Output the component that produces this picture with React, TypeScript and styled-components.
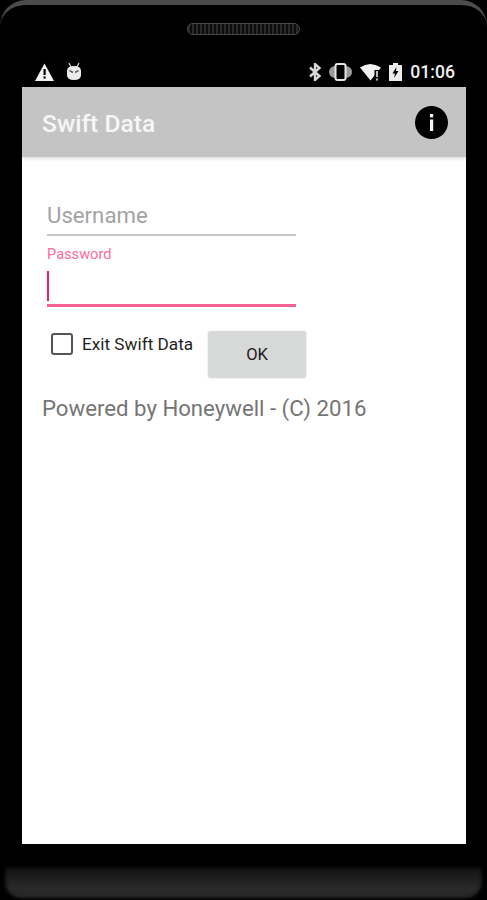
import styled, { createGlobalStyle } from 'styled-components'

const GlobalStyle = createGlobalStyle`
  html, body {
    margin: 0;
    padding: 0;
    background: #000;
  }
  body {
    font-family: Roboto, "Liberation Sans", sans-serif;
  }
`

const Device = styled.div`
  width: 487px;
  height: 900px;
  background: #000;
  display: flex;
  flex-direction: column;
  overflow: hidden;
`

const TopBezel = styled.div`
  height: 87px;
  box-sizing: border-box;
  padding-top: 18px;
  border-top: 5px solid #4c4c4c;
  border-radius: 26px 26px 0 0;
  display: flex;
  flex-direction: column;
  align-items: center;
`

const Speaker = styled.div`
  width: 113px;
  height: 12px;
  box-sizing: border-box;
  flex-shrink: 0;
  border: 1px solid #4a4a4a;
  border-radius: 6px;
  background: repeating-linear-gradient(90deg, #2a2a2a 0 2px, #0c0c0c 2px 4px);
`

const StatusBar = styled.div`
  margin-top: 24px;
  width: 100%;
  height: 26px;
  box-sizing: border-box;
  padding: 0 32px 0 35px;
  display: flex;
  align-items: center;
  justify-content: space-between;
`

const StatusGroup = styled.div<{ $gap: number }>`
  display: flex;
  align-items: center;
  gap: ${({ $gap }) => $gap}px;
`

const Clock = styled.span`
  color: #f0f0f0;
  font-size: 17.6px;
  font-weight: 500;
`

const Screen = styled.main`
  width: 444px;
  height: 757px;
  margin-left: 22px;
  flex-shrink: 0;
  background: #fff;
  display: flex;
  flex-direction: column;
`

const Toolbar = styled.header`
  height: 70px;
  flex-shrink: 0;
  box-sizing: border-box;
  padding: 2px 18px 0 20px;
  background: #c4c4c4;
  box-shadow: 0 2px 3px rgba(0, 0, 0, 0.12);
  display: flex;
  align-items: center;
  justify-content: space-between;
`

const Title = styled.h1`
  margin: 0;
  color: #f6f6f6;
  font-size: 24.6px;
  font-weight: 500;
`

const InfoWrap = styled.div`
  height: 33px;
  margin-top: -2px;
`

const Form = styled.form`
  padding: 44px 0 0 25px;
  display: flex;
  flex-direction: column;
`

const UsernameField = styled.div`
  width: 249px;
  height: 35px;
  box-sizing: border-box;
  border-bottom: 2px solid #c6c6c6;
  color: #a3a3a3;
  font-size: 22.2px;
  line-height: 29px;
`

const PasswordLabel = styled.label`
  margin-top: 9px;
  color: #fb6c9c;
  font-size: 14.6px;
  line-height: 18px;
`

const PasswordField = styled.div`
  width: 249px;
  height: 36px;
  margin-top: 8px;
  box-sizing: border-box;
  border-bottom: 3px solid #f4628f;
`

const Caret = styled.div`
  width: 2px;
  height: 30px;
  background: #e91e63;
`

const ActionRow = styled.div`
  margin-top: 24px;
  padding-left: 4px;
  display: flex;
  align-items: flex-start;
`

const CheckLabel = styled.label`
  margin-top: 2px;
  display: flex;
  align-items: center;
  gap: 9px;
  color: #1f1f1f;
  font-size: 17.2px;
`

const CheckBox = styled.span`
  width: 22px;
  height: 22px;
  box-sizing: border-box;
  border: 2px solid #555;
  border-radius: 3px;
`

const OkButton = styled.button`
  width: 98px;
  height: 46px;
  margin-left: 15px;
  padding: 0;
  border: none;
  border-radius: 2px;
  background: #d7d8d8;
  box-shadow: 0 1px 2px rgba(0, 0, 0, 0.2);
  color: #1a1a1a;
  font-family: Roboto, "Liberation Sans", sans-serif;
  font-size: 16.5px;
  font-weight: 400;
`

const Footer = styled.p`
  margin: 17px 0 0 20px;
  color: #757575;
  font-size: 22.2px;
  line-height: 28px;
`

const Chin = styled.div`
  height: 34px;
  margin: 22px 3px 0;
  flex-shrink: 0;
  border-radius: 0 0 18px 18px;
  background: linear-gradient(#101010, #2a2a2a 65%, #262626);
  box-shadow: inset 0 -1px 3px #000, inset 2px 0 4px #000, inset -2px 0 4px #000;
`

function WarningIcon() {
  return (
    <svg width="19" height="18" viewBox="0 0 19 18">
      <path d="M9.5 0.5 L19 18 H0 Z" fill="#f4f4f4" />
      <rect x="8.5" y="6" width="2.2" height="6" fill="#000" />
      <rect x="8.5" y="13.4" width="2.2" height="2.2" fill="#000" />
    </svg>
  )
}

function BugIcon() {
  return (
    <svg width="16" height="18" viewBox="0 0 16 18">
      <path d="M3 0 L5 4 M13 0 L11 4" stroke="#d8d8d8" strokeWidth="1.2" />
      <path d="M1 8 Q1 3 8 3 Q15 3 15 8 V12 Q15 17 8 17 Q1 17 1 12 Z" fill="#ececec" />
      <path d="M3.5 7.5 L7 9.5 M12.5 7.5 L9 9.5" stroke="#666" strokeWidth="1.6" />
    </svg>
  )
}

function BluetoothIcon() {
  return (
    <svg width="12" height="18" viewBox="0 0 12 18" fill="none">
      <path d="M1 4.5 L10.5 13 L6 17 V1 L10.5 5 L1 13.5" stroke="#d8d8d8" strokeWidth="2.4" />
    </svg>
  )
}

function VibrateIcon() {
  return (
    <svg width="23" height="18" viewBox="0 0 23 18" fill="none">
      <path d="M6 3 Q0 4 0 9 Q0 14 6 15 Z M17 3 Q23 4 23 9 Q23 14 17 15 Z" fill="#9a9a9a" />
      <rect x="6.5" y="1" width="10" height="16" rx="2" fill="#000" stroke="#e4e4e4" strokeWidth="2" />
    </svg>
  )
}

function WifiIcon() {
  return (
    <svg width="21" height="18" viewBox="0 0 21 18">
      <path d="M0 4.5 Q10 -2.5 21 4.5 L10.5 17.5 Z" fill="#f2f2f2" />
      <rect x="14.5" y="7" width="6.5" height="11" fill="#000" />
      <rect x="16" y="8" width="2" height="6" fill="#bbb" />
      <rect x="16" y="15.5" width="2" height="2" fill="#bbb" />
    </svg>
  )
}

function BatteryIcon() {
  return (
    <svg width="13" height="18" viewBox="0 0 13 18">
      <path d="M4 0 H9 V2 H13 V18 H0 V2 H4 Z" fill="#ececec" />
      <path d="M7.5 4 L3.5 10.5 H6 L5 15 L9.5 8 H7 Z" fill="#000" />
    </svg>
  )
}

function InfoIcon() {
  return (
    <svg width="33" height="33" viewBox="0 0 33 33">
      <circle cx="16.5" cy="16.5" r="16.5" fill="#000" />
      <rect x="15" y="8" width="3.2" height="3.4" fill="#f2f2f2" />
      <rect x="15" y="13.5" width="3.2" height="11.5" fill="#f2f2f2" />
    </svg>
  )
}

export default function App() {
  return (
    <>
      <GlobalStyle />
      <Device>
        <TopBezel>
          <Speaker />
          <StatusBar>
            <StatusGroup $gap={12}>
              <WarningIcon />
              <BugIcon />
            </StatusGroup>
            <StatusGroup $gap={8}>
              <BluetoothIcon />
              <VibrateIcon />
              <WifiIcon />
              <BatteryIcon />
              <Clock>01:06</Clock>
            </StatusGroup>
          </StatusBar>
        </TopBezel>
        <Screen>
          <Toolbar>
            <Title>Swift Data</Title>
            <InfoWrap>
              <InfoIcon />
            </InfoWrap>
          </Toolbar>
          <Form>
            <UsernameField>Username</UsernameField>
            <PasswordLabel>Password</PasswordLabel>
            <PasswordField>
              <Caret />
            </PasswordField>
            <ActionRow>
              <CheckLabel>
                <CheckBox />
                Exit Swift Data
              </CheckLabel>
              <OkButton type="button">OK</OkButton>
            </ActionRow>
          </Form>
          <Footer>Powered by Honeywell - (C) 2016</Footer>
        </Screen>
        <Chin />
      </Device>
    </>
  )
}
